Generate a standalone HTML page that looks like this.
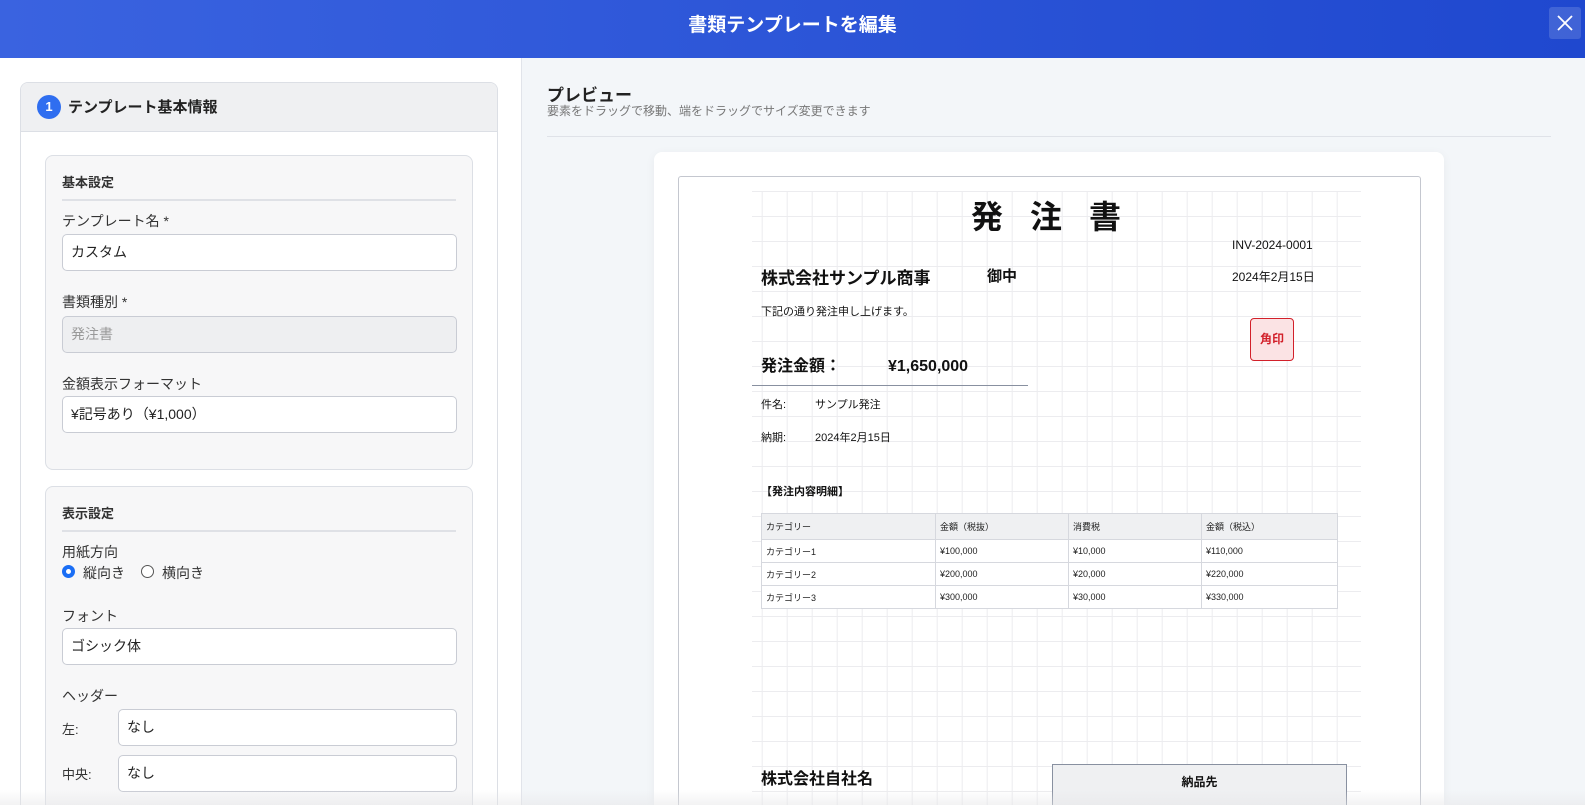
<!DOCTYPE html>
<html><head><meta charset="utf-8"><style>
*{box-sizing:border-box;margin:0;padding:0}
html,body{width:1585px;height:805px;overflow:hidden}
body{font-family:"Liberation Sans","Noto Sans CJK JP",sans-serif;background:#f3f6f9;color:#1f2937}
#w{position:relative;width:1585px;height:805px;overflow:hidden}
.a{position:absolute}
.hdr{left:0;top:0;width:1585px;height:58px;background:linear-gradient(90deg,#3a63e0,#1f48cf);color:#fff;font-size:19px;font-weight:bold;text-align:center;line-height:52px}
.close{left:1549px;top:7px;width:32px;height:32px;background:rgba(255,255,255,.15);border-radius:3px}
.left{left:0;top:58px;width:522px;height:747px;background:#fff;border-right:1px solid #e1e4ea}
.card{left:20px;top:82px;width:478px;height:723px;border:1px solid #dcdfe5;border-bottom:none;border-radius:8px 8px 0 0;background:#fff;overflow:hidden}
.card .ch{height:49px;background:#eff0f2;border-bottom:1px solid #dcdfe5;font-size:15px;font-weight:bold;padding-left:47px;line-height:49px;color:#222}
.num{left:16px;top:12px;width:24px;height:24px;border-radius:50%;background:#2f6ef0;color:#fff;font-size:13px;text-align:center;line-height:24px;font-weight:bold}
.sub{background:#f7f7f8;border:1px solid #dcdfe5;border-radius:8px}
.st{font-size:13px;font-weight:bold;color:#333;padding-bottom:8px;border-bottom:2px solid #dfe1e6;position:absolute;left:16px;right:16px;top:16px}
.lb{font-size:14px;color:#333}
.in{background:#fff;border:1px solid #c9ccd4;border-radius:5px;height:37px;font-size:14px;line-height:35px;padding-left:8px;color:#222}
.dis{background:#eeeff1;color:#999}
.grid{left:752px;top:191px;width:609px;height:614px;background-color:#fff;
background-image:linear-gradient(90deg,#ececef 1px,transparent 1px),linear-gradient(#ececef 1px,transparent 1px);
background-size:25px 25px;background-position:9.7px 0,0 0}
table{border-collapse:collapse;font-size:9px;color:#222}
td{border:1px solid #d6d8de;height:23px;padding-left:4px;background:#fff}
</style></head><body><div id="w">
<div class="a hdr">書類テンプレートを編集</div>
<div class="a close"><svg width="32" height="32"><path d="M9 9L23 23M23 9L9 23" stroke="#fff" stroke-width="1.8"/></svg></div>

<div class="a left"></div>
<div class="a card"><div class="ch">テンプレート基本情報</div><div class="a num">1</div></div>

<div class="a sub" style="left:45px;top:155px;width:428px;height:315px">
<div class="st">基本設定</div>
<div class="a lb" style="left:16px;top:55px">テンプレート名 *</div>
<div class="a in" style="left:16px;top:78px;width:395px">カスタム</div>
<div class="a lb" style="left:16px;top:136px">書類種別 *</div>
<div class="a in dis" style="left:16px;top:160px;width:395px">発注書</div>
<div class="a lb" style="left:16px;top:218px">金額表示フォーマット</div>
<div class="a in" style="left:16px;top:240px;width:395px">¥記号あり（¥1,000）</div>
</div>

<div class="a sub" style="left:45px;top:486px;width:428px;height:319px;border-bottom:none;border-radius:8px 8px 0 0">
<div class="st">表示設定</div>
<div class="a lb" style="left:16px;top:55px">用紙方向</div>
<div class="a" style="left:16px;top:78px;width:13px;height:13px;border-radius:50%;border:4px solid #1a6ef5;background:#fff"></div>
<div class="a lb" style="left:37px;top:76px">縦向き</div>
<div class="a" style="left:95px;top:78px;width:13px;height:13px;border-radius:50%;border:1px solid #555;background:#fff"></div>
<div class="a lb" style="left:116px;top:76px">横向き</div>
<div class="a lb" style="left:16px;top:119px">フォント</div>
<div class="a in" style="left:16px;top:141px;width:395px">ゴシック体</div>
<div class="a lb" style="left:16px;top:199px">ヘッダー</div>
<div class="a lb" style="left:16px;top:232px;font-size:13px">左:</div>
<div class="a in" style="left:72px;top:222px;width:339px">なし</div>
<div class="a lb" style="left:16px;top:277px;font-size:13px">中央:</div>
<div class="a in" style="left:72px;top:268px;width:339px">なし</div>
</div>

<div class="a" style="left:547px;top:81px;font-size:17px;font-weight:bold;color:#222">プレビュー</div>
<div class="a" style="left:547px;top:102px;font-size:12px;color:#777">要素をドラッグで移動、端をドラッグでサイズ変更できます</div>
<div class="a" style="left:547px;top:136px;width:1004px;height:1px;background:#dfe2e8"></div>

<div class="a" style="left:654px;top:152px;width:790px;height:653px;background:#fff;border-radius:8px 8px 0 0;box-shadow:0 2px 10px rgba(0,0,0,.05)"></div>
<div class="a" style="left:678px;top:176px;width:743px;height:629px;border:1px solid #c4c7cf;border-bottom:none;border-radius:3px 3px 0 0;background:#fff"></div>
<div class="a grid"></div>

<div class="a" style="left:971px;top:192px;font-size:32px;font-weight:bold;letter-spacing:27px;color:#111">発注書</div>
<div class="a" style="left:1232px;top:238px;font-size:12px;color:#111">INV-2024-0001</div>
<div class="a" style="left:1232px;top:268px;font-size:12px;color:#111">2024年2月15日</div>
<div class="a" style="left:761px;top:264px;font-size:17px;font-weight:bold;color:#111">株式会社サンプル商事</div>
<div class="a" style="left:987px;top:265px;font-size:15px;font-weight:bold;color:#111">御中</div>
<div class="a" style="left:761px;top:303px;font-size:11px;color:#111">下記の通り発注申し上げます。</div>
<div class="a" style="left:1250px;top:318px;width:44px;height:43px;border:1.5px solid #d2202a;border-radius:4px;background:#fbe3e4;color:#d2202a;font-size:12px;font-weight:bold;text-align:center;line-height:41px">角印</div>
<div class="a" style="left:761px;top:356px;font-size:16px;font-weight:bold;color:#111;line-height:22px">発注金額：</div>
<div class="a" style="left:888px;top:356px;font-size:16px;font-weight:bold;color:#111;line-height:22px">¥1,650,000</div>
<div class="a" style="left:752px;top:385px;width:276px;height:1px;background:#8890a0"></div>
<div class="a" style="left:761px;top:396px;font-size:11px;color:#111">件名:</div>
<div class="a" style="left:815px;top:396px;font-size:11px;color:#111">サンプル発注</div>
<div class="a" style="left:761px;top:429px;font-size:11px;color:#111">納期:</div>
<div class="a" style="left:815px;top:429px;font-size:11px;color:#111">2024年2月15日</div>
<div class="a" style="left:761px;top:483px;font-size:11px;font-weight:bold;color:#111">【発注内容明細】</div>

<table class="a" style="left:761px;top:513px;width:577px">
<tr><td style="width:174px;background:#eff0f2;height:26px">カテゴリー</td><td style="width:133px;background:#eff0f2">金額（税抜）</td><td style="width:133px;background:#eff0f2">消費税</td><td style="background:#eff0f2">金額（税込）</td></tr>
<tr><td>カテゴリー1</td><td>¥100,000</td><td>¥10,000</td><td>¥110,000</td></tr>
<tr><td>カテゴリー2</td><td>¥200,000</td><td>¥20,000</td><td>¥220,000</td></tr>
<tr><td>カテゴリー3</td><td>¥300,000</td><td>¥30,000</td><td>¥330,000</td></tr>
</table>

<div class="a" style="left:761px;top:769px;font-size:16px;font-weight:bold;color:#111;line-height:22px">株式会社自社名</div>
<div class="a" style="left:1052px;top:764px;width:295px;height:41px;border:1px solid #8890a0;border-bottom:none;background:#eff0f2;text-align:center;font-size:12px;font-weight:bold;line-height:34px;color:#111">納品先</div>
<div class="a" style="left:0;top:790px;width:1585px;height:15px;background:linear-gradient(rgba(255,255,255,0),rgba(230,230,232,.5))"></div>
</div></body></html>
